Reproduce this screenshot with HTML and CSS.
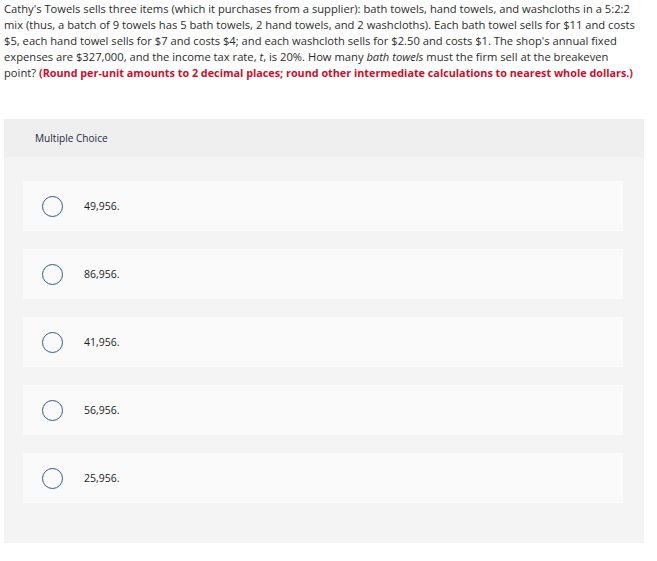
FILE: index.html
```html
<!DOCTYPE html>
<html>
<head>
<meta charset="utf-8">
<link rel="stylesheet" href="styles.css">
</head>
<body>
<div class="page">
  <p class="question">Cathy's Towels sells three items (which it purchases from a supplier): bath towels, hand towels, and washcloths in a 5:2:2<br>mix (thus, a batch of 9 towels has 5 bath towels, 2 hand towels, and 2 washcloths). Each bath towel sells for $11 and costs<br>$5, each hand towel sells for $7 and costs $4; and each washcloth sells for $2.50 and costs $1. The shop's annual fixed<br>expenses are $327,000, and the income tax rate, <em>t</em>, is 20%. How many <em>bath towels</em> must the firm sell at the breakeven<br>point? <strong class="note">(Round per-unit amounts to 2 decimal places; round other intermediate calculations to nearest whole dollars.)</strong></p>

  <section class="panel">
    <div class="panel-head">Multiple Choice</div>
    <div class="panel-body">
      <div class="option"><span class="radio"></span><span class="label">49,956.</span></div>
      <div class="option"><span class="radio"></span><span class="label">86,956.</span></div>
      <div class="option"><span class="radio"></span><span class="label">41,956.</span></div>
      <div class="option"><span class="radio"></span><span class="label">56,956.</span></div>
      <div class="option"><span class="radio"></span><span class="label">25,956.</span></div>
    </div>
  </section>
</div>
</body>
</html>
```

FILE: styles.css
```css
html, body {
  margin: 0;
  padding: 0;
  background: #ffffff;
}

body {
  font-family: "Open Sans", "Liberation Sans", sans-serif;
  color: #2b2b2b;
}

.page {
  width: 640px;
  padding: 0 0 0 4px;
}

.question {
  margin: 0;
  padding-top: 1px;
  font-size: 11.2px;
  line-height: 16px;
  white-space: nowrap;
  color: #2b2b2b;
}

.question em {
  font-style: italic;
}

.note {
  color: #c8102e;
  font-weight: 700;
  font-size: 10.8px;
}

.panel {
  margin-top: 38px;
  width: 640px;
  background: #f4f4f4;
}

.panel-head {
  height: 38px;
  background: #efefef;
  display: flex;
  align-items: center;
  padding-left: 31px;
  font-size: 10.1px;
  color: #1f2a44;
}

.panel-body {
  display: flex;
  flex-direction: column;
  gap: 18px;
  padding: 24px 21px 40px 19px;
}

.option {
  height: 50px;
  background: #fafafa;
  display: flex;
  align-items: center;
}

.radio {
  width: 19px;
  height: 19px;
  border: 1.6px solid #2d5d8b;
  border-radius: 50%;
  margin-left: 19px;
  box-sizing: content-box;
}

.label {
  margin-left: 21px;
  font-size: 10.5px;
  color: #222;
}
```
